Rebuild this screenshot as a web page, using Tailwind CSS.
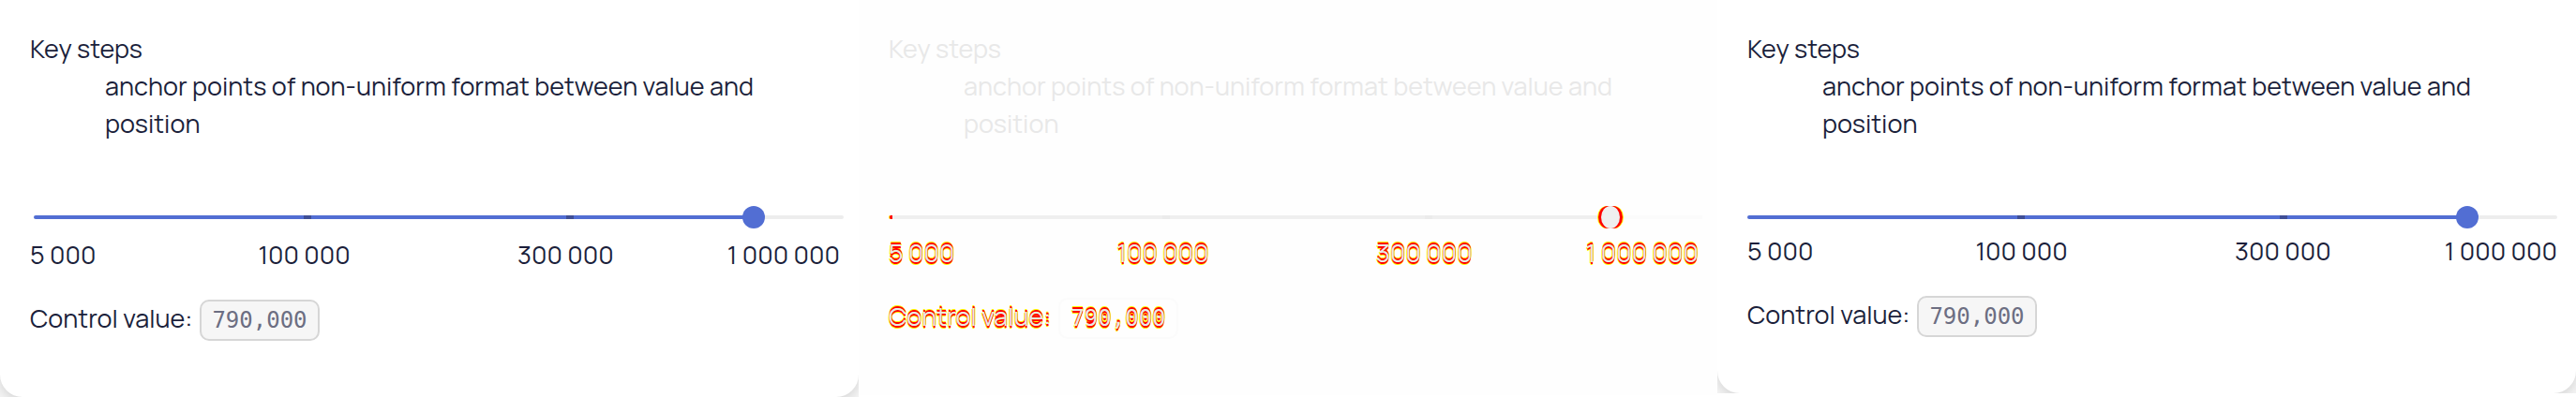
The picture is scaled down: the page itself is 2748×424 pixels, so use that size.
<!DOCTYPE html>
<html lang="en">
<head>
<meta charset="utf-8">
<title>Slider key steps</title>
<script src="https://cdn.jsdelivr.net/npm/@tailwindcss/browser@4"></script>
</head>
<body class="bg-white font-['Manrope','Inter',sans-serif] text-[27px] leading-10 text-[#1b1f3b]">
<main class="grid grid-cols-3 items-start overflow-hidden">

<section class="overflow-hidden bg-[#f4f4f4]">
<div class="rounded-b-[24px] bg-white pt-8 pr-5 pb-[60px] pl-8 shadow-[0_4px_12px_rgba(0,0,0,0.12)]">
<dl><dt>Key steps</dt><dd class="pl-20">anchor points of non-uniform format between value and position</dd></dl>
<div class="mt-[78px] -mr-1 ml-1 flex flex-col">
<input type="range" aria-label="Amount" min="0" max="1000" value="900" class="h-1 appearance-none rounded-full bg-[linear-gradient(to_right,#526ed3_33.33%,#3f4f96_33.33%,#3f4f96_34.26%,#526ed3_34.26%,#526ed3_65.74%,#3f4f96_65.74%,#3f4f96_66.67%,#526ed3_66.67%,#526ed3_89%,#ededed_89%)] [&::-webkit-slider-thumb]:size-6 [&::-webkit-slider-thumb]:appearance-none [&::-webkit-slider-thumb]:rounded-full [&::-webkit-slider-thumb]:bg-[#526ed3]">
</div>
<div class="mt-[18px] grid grid-cols-[11fr_20fr_20fr_11fr] whitespace-nowrap"><span>5 000</span><span class="text-center">100 000</span><span class="text-center">300 000</span><span class="text-right">1 000 000</span></div>
<p class="mt-7 flex items-baseline gap-2">Control value: <code class="rounded-[10px] border-2 border-[#d6d6d6] bg-[#f6f6f6] px-[11px] font-['DejaVu_Sans_Mono',monospace] text-[24px] text-[#6c6e82]">790,000</code></p>
</div>
</section>

<section class="bg-[#fefefe] pt-8 pr-5 pb-[60px] pl-8 text-[#e8e8e8]">
<dl><dt>Key steps</dt><dd class="pl-20">anchor points of non-uniform format between value and position</dd></dl>
<div class="mt-[78px] -mr-1 flex items-center">
<span class="h-1 w-1 rounded-l-full border-l border-[#ffff00] bg-[#ff0000]"></span>
<input type="range" aria-label="Amount difference" min="0" max="1000" value="896" class="h-1 min-w-0 flex-1 appearance-none bg-[linear-gradient(to_right,#efefef_33.33%,#ebebeb_33.33%,#ebebeb_34.26%,#efefef_34.26%,#efefef_65.74%,#ebebeb_65.74%,#ebebeb_66.67%,#efefef_66.67%,#efefef_89%,#fbfbfb_89%)] [&::-webkit-slider-thumb]:h-6 [&::-webkit-slider-thumb]:w-5 [&::-webkit-slider-thumb]:appearance-none [&::-webkit-slider-thumb]:rounded-[50%] [&::-webkit-slider-thumb]:bg-[#efefef] [&::-webkit-slider-thumb]:shadow-[3px_0_0_#ff0000,-3px_0_0_#ff0000,4px_0_0_#ffff00,-4px_0_0_#ffff00]">
</div>
<div class="mt-4 grid grid-cols-[11fr_20fr_20fr_11fr] whitespace-nowrap [text-shadow:0_-2px_#ff0000,0_2px_#ff0000,0_-3px_#ffff00,0_3px_#ffff00,1px_-1px_#ffff00,-1px_1px_#ffff00]"><span>5 000</span><span class="text-center">100 000</span><span class="text-center">300 000</span><span class="text-right">1 000 000</span></div>
<p class="mt-7 flex items-baseline gap-2 [text-shadow:0_-2px_#ff0000,0_2px_#ff0000,0_-3px_#ffff00,0_3px_#ffff00,1px_-1px_#ffff00,-1px_1px_#ffff00]">Control value: <code class="rounded-[10px] border-2 border-[#fbfbfb] px-[11px] font-['DejaVu_Sans_Mono',monospace] text-[24px]">790,000</code></p>
</section>

<section class="overflow-hidden bg-[#f4f4f4]">
<div class="rounded-b-[24px] bg-white pt-8 pr-5 pb-[60px] pl-8 shadow-[0_4px_12px_rgba(0,0,0,0.12)]">
<dl><dt>Key steps</dt><dd class="pl-20">anchor points of non-uniform format between value and position</dd></dl>
<div class="mt-[78px] flex flex-col">
<input type="range" aria-label="Amount" min="0" max="1000" value="900" class="h-1 appearance-none rounded-full bg-[linear-gradient(to_right,#526ed3_33.33%,#3f4f96_33.33%,#3f4f96_34.26%,#526ed3_34.26%,#526ed3_65.74%,#3f4f96_65.74%,#3f4f96_66.67%,#526ed3_66.67%,#526ed3_89%,#ededed_89%)] [&::-webkit-slider-thumb]:size-6 [&::-webkit-slider-thumb]:appearance-none [&::-webkit-slider-thumb]:rounded-full [&::-webkit-slider-thumb]:bg-[#526ed3]">
</div>
<div class="mt-[14px] grid grid-cols-[11fr_20fr_20fr_11fr] whitespace-nowrap"><span>5 000</span><span class="text-center">100 000</span><span class="text-center">300 000</span><span class="text-right">1 000 000</span></div>
<p class="mt-7 flex items-baseline gap-2">Control value: <code class="rounded-[10px] border-2 border-[#d6d6d6] bg-[#f6f6f6] px-[11px] font-['DejaVu_Sans_Mono',monospace] text-[24px] text-[#6c6e82]">790,000</code></p>
</div>
</section>
</main>
</body>
</html>
